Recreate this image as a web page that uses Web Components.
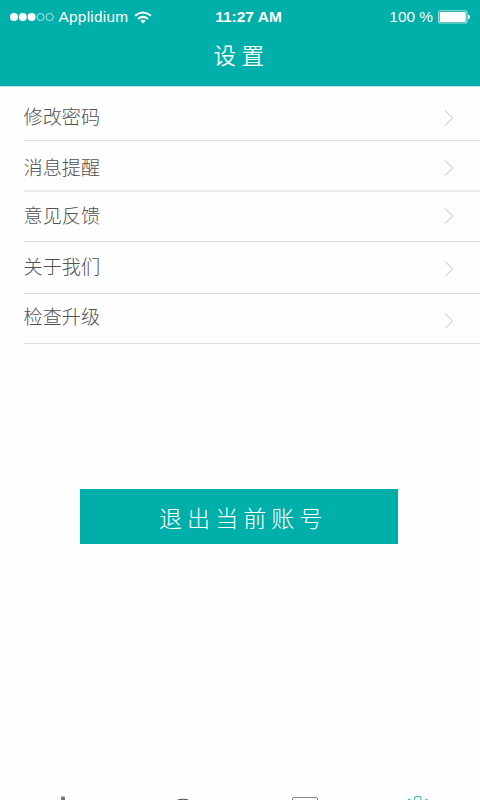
<!DOCTYPE html>
<html lang="zh-CN"><head><meta charset="utf-8"><title>设置</title>
<style>html,body{margin:0;height:100%;overflow:hidden;background:#fefefe}body{font-family:"Liberation Sans","Noto Sans CJK SC",sans-serif}</style></head>
<body><settings-page></settings-page>
<script>
const define = (name, html) => customElements.define(name, class extends HTMLElement {
  constructor() {
    super();
    const t = document.createElement('template');
    t.innerHTML = html;
    this.attachShadow({mode: 'open'}).append(t.content.cloneNode(true));
  }
});

define('status-bar', `<style>
:host{display:grid;grid-template-columns:1fr auto 1fr;align-items:center;height:34px;padding:0 10px 0 9px;color:#fff;line-height:18px;white-space:nowrap}
div{display:flex;align-items:center}
svg{display:block;flex:none}
.carrier{margin-left:4.5px;font-size:15.4px;letter-spacing:.25px}
.wifi{margin-left:6px}
b{font-size:15.5px;margin-left:18px}
.right{justify-content:flex-end;font-size:15.4px}
.battery{margin-left:5px}
</style>
<div><svg width="45" height="10" viewBox="0 0 45 10" fill="#fff"><circle cx="5" cy="5" r="4"/><circle cx="13.8" cy="5" r="4"/><circle cx="22.6" cy="5" r="4"/><g fill="none" stroke="#d9f2f0" stroke-width=".8"><circle cx="31.6" cy="5" r="3.6"/><circle cx="40.7" cy="5" r="3.6"/></g></svg>
<span class="carrier">Applidium</span>
<svg class="wifi" width="18" height="13" viewBox="0 0 18 13" fill="none" stroke="#fff" stroke-width="2"><path d="M1 4.8Q9-1.7 17 4.8M4 8Q9 3.8 14 8"/><path d="M6.3 9.8Q9 7.7 11.7 9.8L9 12.5Z" fill="#fff" stroke="none"/></svg></div>
<b>11:27 AM</b>
<div class="right"><span>100 %</span><svg class="battery" width="32" height="14" viewBox="0 0 32 14"><rect x=".6" y=".8" width="28.5" height="12.2" rx="2" fill="none" stroke="#a5dfdc" stroke-width="1.1"/><rect x="1.8" y="2" width="26" height="10" rx=".7" fill="#fff"/><path d="M30 4.6Q32 5.2 32 7T30 9.2Z" fill="#fff"/></svg></div>`);

define('page-header', `<style>
:host{display:block;height:86px;background:#00afa9;color:#fff;border-bottom:1px solid #b5e6e4;box-sizing:content-box}
h1{margin:4px 0 0;text-align:center;font:350 22.5px/33px "Noto Sans CJK SC",sans-serif;letter-spacing:5.5px;padding-left:3px}
</style><status-bar></status-bar><h1><slot></slot></h1>`);

define('settings-row', `<style>
:host{display:flex;justify-content:space-between;align-items:flex-start;box-sizing:border-box;height:var(--h);margin-left:24px;padding-right:26px;border-bottom:var(--line-width,1px) solid var(--line,#dedede);color:#525252}
span{margin:var(--label) 0 0 -.5px;font:300 19.2px/28px "Noto Sans CJK SC",sans-serif}
svg{display:block;margin-top:var(--chevron)}
</style><span><slot></slot></span><svg width="10" height="16" viewBox="0 0 10 16" fill="none" stroke="#bbb"><path d="M1.2.7 8.6 8 1.2 15.3"/></svg>`);

define('action-button', `<style>
:host{display:block;margin:145px 0 0 80px;width:317.5px}
button{display:block;width:100%;height:55px;padding:2px 0 0 9px;border:0;border-radius:0;background:#00afa9;color:#fff;font:300 23px/51px "Noto Sans CJK SC",sans-serif;letter-spacing:5.1px}
</style><button><slot></slot></button>`);

define('tab-bar', `<style>
:host{display:block;margin-top:auto;height:5px}
svg{display:block}
</style><svg width="480" height="5" viewBox="0 0 480 5" fill="none">
<rect x="61" y="1.5" width="4" height="4" rx="1" fill="#777"/>
<path d="M174 7Q183 1.5 192 7" stroke="#555" stroke-width="1.2"/>
<path d="M292.5 5V4Q292.5 2.5 294 2.5H316Q317.5 2.5 317.5 4V5" stroke="#888"/>
<path d="M414.6 5V3Q414.6 1.6 416 1.6H419.5Q421 1.6 421 3V5M408 4.5h2.6M425.2 4.5h2.6" stroke="#4bbdb9" stroke-width="1.2"/>
</svg>`);

define('settings-page', `<style>
:host{display:flex;flex-direction:column;width:480px;height:800px;overflow:hidden}
</style>
<page-header>设置</page-header>
<main>
<settings-row style="--h:54px;--label:15px;--chevron:23px">修改密码</settings-row>
<settings-row style="--h:51px;--label:11.5px;--chevron:19px;--line-width:2px;--line:#ebebeb">消息提醒</settings-row>
<settings-row style="--h:50px;--label:9px;--chevron:15.5px">意见反馈</settings-row>
<settings-row style="--h:52px;--label:10px;--chevron:19px">关于我们</settings-row>
<settings-row style="--h:50px;--label:8px;--chevron:18.5px">检查升级</settings-row>
<action-button>退出当前账号</action-button>
</main>
<tab-bar></tab-bar>`);
</script></body></html>
